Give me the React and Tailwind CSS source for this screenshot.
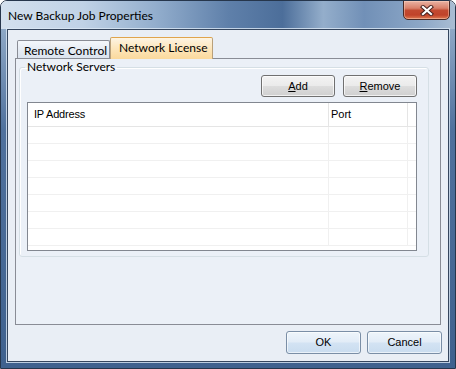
const ui = "font-['Liberation_Sans',Arial,sans-serif]";
const seg = "font-['Lato','Open_Sans',sans-serif]";

function PushButton({ children, className = "" }) {
  return (
    <button
      className={`flex h-[22px] w-[74px] items-center justify-center rounded-[3px] border border-[#707070] bg-[linear-gradient(180deg,#f3f3f3_0%,#ebebeb_48%,#dddddd_52%,#cfcfcf_100%)] text-[11px] text-black shadow-[inset_0_0_0_1px_rgba(255,255,255,0.7)] ${ui} ${className}`}
    >
      {children}
    </button>
  );
}

function DialogButton({ children }) {
  return (
    <button
      className={`flex h-[23px] w-[75px] items-center justify-center rounded-[3px] border border-[#7a8ea6] bg-[linear-gradient(180deg,#eef5fb_0%,#e2ecf7_48%,#d3e3f3_52%,#c9dcef_100%)] text-[11px] text-black shadow-[inset_0_0_0_1px_rgba(255,255,255,0.6)] ${ui}`}
    >
      {children}
    </button>
  );
}

export default function App() {
  const rows = [0, 1, 2, 3, 4, 5, 6];

  return (
    <div className="h-[369px] w-[456px] overflow-hidden bg-white">
      <div className="flex h-full w-full flex-col overflow-hidden rounded-t-[7px] border border-[#26364c]">
        {/* title bar */}
        <div className="flex h-[28px] shrink-0 items-start justify-between bg-[linear-gradient(90deg,#d3e0ee_0%,#c0d2e6_18%,#93aecd_34%,#5f80aa_50%,#4c6e9a_62%,#94aecb_71%,#7190b7_80%,#8ba6c6_92%,#a9bdd3_100%)]">
          <span className={`whitespace-nowrap pl-[7px] pt-[8px] text-[12px] leading-[14px] text-black ${seg}`}>
            New Backup Job Properties
          </span>
          <div className="mr-[5px] -mt-[1px] flex h-[20px] w-[47px] items-center justify-center rounded-b-[5px] border border-[#4a2a26] bg-[linear-gradient(180deg,#eab3a4_0%,#d9806a_40%,#c24a31_52%,#c0432a_78%,#de7a52_100%)] shadow-[inset_0_0_0_1px_rgba(255,220,200,0.45)]">
            <svg width="14" height="11" viewBox="0 0 14 11">
              <path d="M3 2 L11 9 M11 2 L3 9" stroke="#4a2320" strokeWidth="4.2" strokeLinecap="square" />
              <path d="M3 2 L11 9 M11 2 L3 9" stroke="#ffffff" strokeWidth="2.2" strokeLinecap="square" />
            </svg>
          </div>
        </div>

        {/* frame body */}
        <div className="flex flex-1 flex-col bg-[linear-gradient(180deg,#8ea8c6_0%,#4f719d_30%,#3f618e_100%)] px-[6px] pb-[6px]">
          <div className="flex flex-1 flex-col border border-[#35465e] bg-[#e9eef5] px-[7px] pt-[7px] shadow-[0_0_0_1px_rgba(220,232,245,0.8)]">
            {/* tab strip */}
            <div className="flex h-[21px] items-end pl-[2px]">
              <div className={`flex h-[18px] w-[93px] items-center whitespace-nowrap rounded-t-[2px] border border-b-0 border-[#898c95] bg-[linear-gradient(180deg,#f4f7fb_0%,#e6ecf4_50%,#dbe3ee_100%)] pl-[6px] pt-[2px] text-[12px] leading-none text-black ${seg}`}>
                Remote Control
              </div>
              <div className={`relative z-10 -mb-[1px] flex h-[22px] w-[103px] items-center whitespace-nowrap rounded-t-[2px] border border-b-0 border-[#b9a07a] border-t-[#e0a44c] bg-[linear-gradient(180deg,#fdf4e3_0%,#fde7bf_45%,#fbd99c_100%)] pl-[8px] pb-[2px] text-[12px] leading-none text-black ${seg}`}>
                Network License
              </div>
            </div>

            {/* tab page */}
            <div className="flex h-[267px] flex-col border border-[#898c95] bg-[#ebf0f7] pl-[3px] pr-[11px]">
              <fieldset className="mt-[1px] rounded-[3px] border border-[#d5dfe5] pb-[5px] pl-[7px] pr-[11px] shadow-[inset_1px_1px_0_#ffffff]">
                <legend className={`-ml-[2px] whitespace-nowrap px-[2px] text-[12px] leading-[14px] text-black ${seg}`}>
                  Network Servers
                </legend>
                <div className="flex justify-end gap-[8px] pt-[1px]">
                  <PushButton>
                    <span className="underline">A</span>dd
                  </PushButton>
                  <PushButton>
                    <span className="underline">R</span>emove
                  </PushButton>
                </div>

                {/* list view */}
                <div className={`mt-[5px] h-[149px] overflow-hidden border border-[#828790] bg-white text-[11px] text-black ${ui}`}>
                  <div className="flex h-[24px] border-b border-[#e5e5e5]">
                    <div className="flex w-[301px] items-center border-r border-[#e5e5e5] pl-[6px] tracking-[-0.2px]">IP Address</div>
                    <div className="flex w-[79px] items-center border-r border-[#e5e5e5] pl-[2px]">Port</div>
                    <div className="flex-1" />
                  </div>
                  {rows.map((r) => (
                    <div key={r} className="flex h-[17px] border-b border-[#f0f0f0]">
                      <div className="w-[301px] border-r border-[#f0f0f0]" />
                      <div className="w-[79px] border-r border-[#f0f0f0]" />
                      <div className="flex-1" />
                    </div>
                  ))}
                </div>
              </fieldset>
            </div>

            {/* dialog buttons */}
            <div className="-mr-[1px] mt-[6px] flex justify-end gap-[6px]">
              <DialogButton>OK</DialogButton>
              <DialogButton>Cancel</DialogButton>
            </div>
          </div>
        </div>
      </div>
    </div>
  );
}
